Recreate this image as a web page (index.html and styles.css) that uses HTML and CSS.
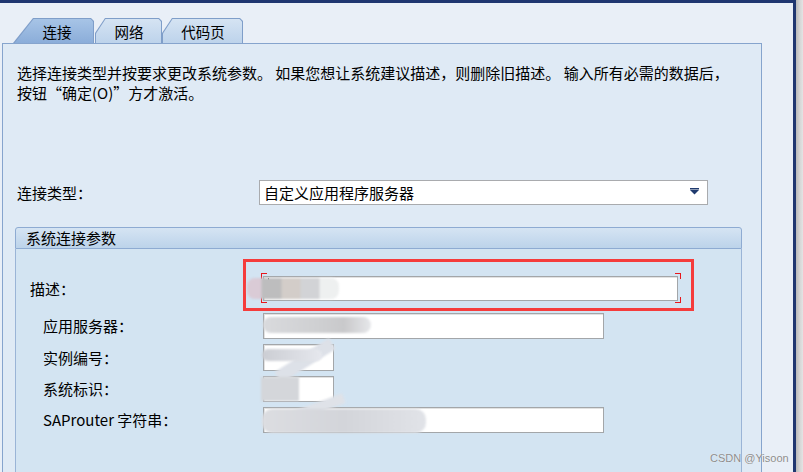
FILE: index.html
```html
<!DOCTYPE html>
<html lang="zh-CN">
<head>
<meta charset="utf-8">
<title>连接</title>
<link rel="stylesheet" href="styles.css">
</head>
<body>
<div class="window">
  <div class="tabs">
    <div class="tab active"><span class="tab-label">连接</span></div>
    <div class="tab second"><span class="tab-label">网络</span></div>
    <div class="tab third"><span class="tab-label">代码页</span></div>
  </div>
  <div class="panel">
    <p class="intro">选择连接类型并按要求更改系统参数。 如果您想让系统建议描述，则删除旧描述。 输入所有必需的数据后，<br>按钮“确定(O)”方才激活。</p>
    <div class="type-row">
      <span class="type-label">连接类型：</span>
      <div class="select">
        <span>自定义应用程序服务器</span>
        <svg class="arrow" width="9" height="7" viewBox="0 0 9 7"><rect x="0" y="0" width="9" height="1.5" fill="#1f3a6e"/><path d="M0 2 L9 2 L4.5 6.5 Z" fill="#1f3a6e"/></svg>
      </div>
    </div>
    <div class="group">
      <div class="group-head">系统连接参数</div>
      <div class="group-body">
        <div class="row r1">
          <span class="lbl lbl-desc">描述：</span>
          <div class="field wide-desc focus">
            <span class="c tl"></span><span class="c tr"></span><span class="c bl"></span><span class="c br"></span>
            <span class="cursor"></span>
          </div>
        </div>
        <div class="row r2">
          <span class="lbl">应用服务器：</span>
          <div class="field wide"></div>
        </div>
        <div class="row r3">
          <span class="lbl">实例编号：</span>
          <div class="field narrow"></div>
        </div>
        <div class="row r4">
          <span class="lbl">系统标识：</span>
          <div class="field narrow"></div>
        </div>
        <div class="row r5">
          <span class="lbl">SAProuter 字符串：</span>
          <div class="field wide"></div>
        </div>
        <div class="highlight"></div>
        <div class="blur b-desc"></div>
        <div class="blur b-app"></div>
        <div class="blur b-z1"></div>
        <div class="blur b-inst"></div>
        <div class="blur b-sys"></div>
        <div class="blur b-z2"></div>
        <div class="blur b-sap"></div>
      </div>
    </div>
  </div>
</div>
<div class="watermark">CSDN @Yisoon</div>
</body>
</html>
```
FILE: styles.css
```css
html, body {
  margin: 0;
  padding: 0;
}
body {
  width: 803px;
  height: 472px;
  overflow: hidden;
  position: relative;
  background: linear-gradient(to right, #b9b9b9 0, #d6d6d6 4px, #e4e4e4 7px);
  background-position: 796px 0;
  background-repeat: no-repeat;
  background-color: #e4e4e4;
  font-family: "Noto Sans CJK SC", "Noto Sans", sans-serif;
  font-size: 15px;
  color: #000;
}
.window {
  width: 793px;
  height: 469px;
  border-top: 3px solid #1f3670;
  border-right: 3px solid #1f3670;
  background: #e9eff7;
  overflow: hidden;
}
.tabs {
  display: flex;
  margin-top: 15px;
  padding-left: 13px;
  height: 25px;
}
.tab {
  position: relative;
  height: 25px;
  display: flex;
  align-items: center;
  justify-content: center;
  font-size: 14.5px;
}
.tab::before,
.tab::after {
  content: "";
  position: absolute;
  inset: 0;
}
.tab::before {
  background: #7f9ec9;
}
.tab::after {
  background: linear-gradient(#d6e4f3, #bdd3eb);
}
.tab.active {
  width: 81px;
  z-index: 2;
}
.tab.active::before {
  clip-path: polygon(0 100%, 20px 0, calc(100% - 3px) 0, 100% 3px, 100% 100%);
}
.tab.active::after {
  background: linear-gradient(#a8c5e7, #8badd9);
  clip-path: polygon(1.6px 100%, 20.6px 1px, calc(100% - 3.5px) 1px, calc(100% - 1px) 3.5px, calc(100% - 1px) 100%);
}
.tab.second {
  width: 67px;
  margin-left: 1px;
}
.tab.third {
  width: 81px;
  margin-left: 0;
}
.tab.second::before,
.tab.third::before {
  clip-path: polygon(0 15px, 10px 0, calc(100% - 3px) 0, 100% 3px, 100% 100%, 0 100%);
}
.tab.second::after,
.tab.third::after {
  clip-path: polygon(1px 15.5px, 10.5px 1px, calc(100% - 3.5px) 1px, calc(100% - 1px) 3.5px, calc(100% - 1px) 100%, 1px 100%);
}
.tab-label {
  position: relative;
  z-index: 1;
  line-height: 20px;
  padding-top: 2px;
}
.tab.active .tab-label {
  padding-left: 7px;
}
.tab.second .tab-label,
.tab.third .tab-label {
  padding-left: 1px;
}
.panel {
  margin-left: 2px;
  width: 758px;
  height: 440px;
  border: 1px solid #86a4cd;
  border-bottom: none;
  background: #dfeaf5;
}
.intro {
  margin: 0;
  padding: 19px 0 0 14px;
  line-height: 20px;
  white-space: nowrap;
}
.type-row {
  display: flex;
  align-items: center;
  margin-top: 77px;
  height: 25px;
}
.type-label {
  width: 242px;
  padding-left: 14px;
}
.select {
  width: 435px;
  height: 23px;
  border: 1px solid #a9abae;
  background: #fff;
  display: flex;
  align-items: center;
  justify-content: space-between;
  padding: 0 8px 0 4px;
  box-sizing: content-box;
  line-height: 20px;
}
.arrow {
  display: block;
  margin-top: -2px;
}
.group {
  margin-top: 22px;
  margin-left: 12px;
  width: 727px;
}
.group-head {
  height: 20px;
  border: 1px solid #8eabd2;
  border-radius: 3px 3px 0 0;
  background: linear-gradient(#d5e4f3, #bcd3ea);
  padding-left: 10px;
  line-height: 20px;
}
.group-body {
  position: relative;
  height: 230px;
  background: #d3e4f2;
  border-left: 1px solid #9ab4d6;
  border-right: 1px solid #9ab4d6;
  display: flex;
  flex-direction: column;
  padding-left: 27px;
}
.row {
  display: flex;
  align-items: center;
}
.lbl {
  width: 220px;
  line-height: 20px;
}
.lbl-desc {
  margin-left: -13px;
  width: 233px;
}
.r1 { margin-top: 27px; height: 25px; }
.r2 { margin-top: 12px; height: 26px; }
.r3 { margin-top: 5px; height: 27px; }
.r4 { margin-top: 5px; height: 26px; }
.r5 { margin-top: 5px; height: 26px; }
.field {
  position: relative;
  height: 100%;
  box-sizing: border-box;
  background: #fff;
  border: 1px solid #a3a6a9;
  box-shadow: inset 1px 1px 0 #e2e2e2;
}
.wide-desc { width: 415px; }
.wide { width: 341px; }
.narrow { width: 71px; }
.c {
  position: absolute;
  width: 5px;
  height: 5px;
  border-color: #e8161b;
  border-style: solid;
  border-width: 0;
}
.c.tl { left: -3px; top: -4px; border-top-width: 1px; border-left-width: 1px; }
.c.tr { right: -4px; top: -4px; border-top-width: 1px; border-right-width: 1px; }
.c.bl { left: -3px; bottom: -3px; border-bottom-width: 1px; border-left-width: 1px; }
.c.br { right: -4px; bottom: -3px; border-bottom-width: 1px; border-right-width: 1px; }
.cursor {
  position: absolute;
  left: 4px;
  top: 1px;
  width: 1px;
  height: 5px;
  background: #222;
}
.highlight {
  position: absolute;
  left: 227px;
  top: 10px;
  width: 445px;
  height: 46px;
  border: 3px solid #f53c3c;
}
.blur {
  position: absolute;
  filter: blur(1.2px);
}
.b-desc {
  left: 231px;
  top: 29px;
  width: 92px;
  height: 21px;
  border-radius: 8px;
  background: linear-gradient(to right, #dacbd6 0, #dacbd6 14px, #bdbdbe 15px, #bdbdbe 34px, #d3cdc9 35px, #d3cdc9 53px, #d2d3d6 54px, #d2d3d6 72px, #eef0f0 73px);
}
.b-app {
  left: 247px;
  top: 68px;
  width: 108px;
  height: 16px;
  border-radius: 8px;
  background: linear-gradient(to right, #d9dadd, #cfd0d2 50%, #c9c9cb 75%, #e6e7ea);
}
.b-z1 {
  width: 64px;
  height: 13px;
  background: #dde1e8;
  transform: rotate(-32deg);
  transform-origin: left center;
  left: 262px;
  top: 122px;
}
.b-inst {
  left: 246px;
  top: 100px;
  width: 60px;
  height: 12px;
  border-radius: 6px;
  background: linear-gradient(to right, #cbcdd3, #e6e8ee);
}
.b-sys {
  left: 245px;
  top: 128px;
  width: 38px;
  height: 24px;
  background: #d4d6da;
}
.b-z2 {
  left: 262px;
  top: 168px;
  width: 70px;
  height: 10px;
  background: #dfe2e8;
  transform: rotate(-20deg);
  transform-origin: left center;
}
.b-sap {
  left: 246px;
  top: 160px;
  width: 164px;
  height: 24px;
  border-radius: 10px;
  background: linear-gradient(to right, #dcdde1, #d3d5da 50%, #e1e3e8);
}
.watermark {
  position: absolute;
  left: 710px;
  top: 450px;
  white-space: nowrap;
  font-family: "Liberation Sans", Arial, sans-serif;
  font-size: 11px;
  color: #8c8c8c;
  text-shadow: 0 0 1px #fff;
  line-height: 16px;
}
```
